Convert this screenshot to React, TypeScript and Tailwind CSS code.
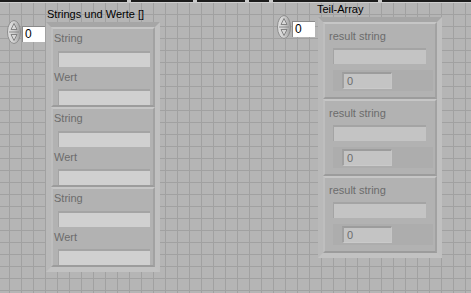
import React from "react";

const font = "font-['Liberation_Sans',Arial,sans-serif]";

function Spinner() {
  return (
    <svg width="14" height="24" viewBox="0 0 14 24">
      <defs>
        <linearGradient id="sg" x1="0" x2="1" y1="0" y2="0">
          <stop offset="0" stopColor="#e2e2e2" />
          <stop offset="0.5" stopColor="#cfcfcf" />
          <stop offset="1" stopColor="#9e9e9e" />
        </linearGradient>
      </defs>
      <ellipse cx="7" cy="12" rx="6.5" ry="11.5" fill="url(#sg)" stroke="#8c8c8c" strokeWidth="1" />
      <line x1="2" y1="12" x2="12" y2="12" stroke="#8c8c8c" strokeWidth="1" />
      <path d="M7 3.5 L10 9.5 L4 9.5 Z" fill="#d8d8d8" stroke="#7a7a7a" strokeWidth="0.9" />
      <path d="M7 20.5 L10 14.5 L4 14.5 Z" fill="#d8d8d8" stroke="#7a7a7a" strokeWidth="0.9" />
    </svg>
  );
}

function NumericControl() {
  return (
    <div className="flex items-start gap-[1px]">
      <Spinner />
      <div className="mt-[6px] h-[16px] w-[23px] border-t border-l border-[#8a8a8a] bg-white pl-[2px] text-[12px] leading-[15px] text-black">
        0
      </div>
    </div>
  );
}

function LeftCluster() {
  return (
    <div className="h-[80px] border-2 border-t-[#c6c6c6] border-l-[#bebebe] border-b-[#9c9c9c] border-r-[#a2a2a2] bg-[#b2b2b2] pt-[3px]">
      <div className="h-[13px] pl-[1px] text-[11px] leading-[13px] text-[#6c6c6c]">String</div>
      <div className="ml-[5px] mt-[6px] h-[16px] w-[92px] border-t-2 border-l border-[#a4a4a4] bg-[#d0d0d0]" />
      <div className="mt-[4px] h-[13px] pl-[1px] text-[11px] leading-[13px] text-[#6c6c6c]">Wert</div>
      <div className="ml-[5px] mt-[5px] h-[16px] w-[92px] border-t-2 border-l border-[#a4a4a4] bg-[#d0d0d0]" />
    </div>
  );
}

function RightCluster() {
  return (
    <div className="h-[77px] border-2 border-t-[#c6c6c6] border-l-[#bebebe] border-b-[#9c9c9c] border-r-[#a2a2a2] bg-[#b2b2b2] pt-[6px]">
      <div className="h-[13px] pl-[4px] text-[11px] leading-[13px] text-[#6c6c6c]">result string</div>
      <div className="ml-[8px] mt-[5px] h-[16px] w-[93px] border-t-2 border-l border-[#a4a4a4] bg-[#c4c4c4]" />
      <div className="ml-[8px] mt-[6px] flex h-[21px] w-[100px] items-center bg-[#adadad] pl-[9px]">
        <div className="h-[17px] w-[50px] border-t-2 border-l-2 border-b border-r border-t-[#9c9c9c] border-l-[#a0a0a0] border-b-[#cacaca] border-r-[#c6c6c6] bg-[#c4c4c4] pl-[3px] text-[11px] leading-[14px] text-[#6c6c6c]">
          0
        </div>
      </div>
    </div>
  );
}

function ArrayFrame({ children }: { children: React.ReactNode }) {
  return (
    <div className="border-[5px] border-t-[#a6a6a6] border-l-[#b9b9b9] border-b-[#c2c2c2] border-r-[#c0c0c0] bg-[#adadad]">
      {children}
    </div>
  );
}

function TopBar() {
  const segs = [128, 62, 48, 20, 106, 89];
  return (
    <div className="flex h-[3px] w-full">
      {segs.map((w, i) => (
        <React.Fragment key={i}>
          <div className="h-[3px] border-b border-b-[#cfcfcf] bg-[#1c1c1c]" style={{ width: w }} />
          {i < segs.length - 1 && <div className="h-[3px] w-[4px] bg-[#c9c9c9]" />}
        </React.Fragment>
      ))}
    </div>
  );
}

export default function App() {
  return (
    <div
      className={`relative h-[293px] w-[471px] overflow-hidden bg-[#b5b5b5] ${font} bg-[linear-gradient(to_right,#a1a1a1_1px,transparent_1px),linear-gradient(to_bottom,#a1a1a1_1px,transparent_1px)] bg-[size:12px_12px] bg-[position:9px_2px]`}
    >
      <TopBar />

      {/* Left numeric index */}
      <div className="absolute left-[7px] top-[20px]">
        <NumericControl />
      </div>

      {/* Left array */}
      <div className="absolute left-[47px] top-[8px] text-[11px] leading-[13px] text-black">Strings und Werte []</div>
      <div className="absolute left-[46px] top-[22px] w-[114px]">
        <ArrayFrame>
          <LeftCluster />
          <LeftCluster />
          <LeftCluster />
        </ArrayFrame>
      </div>

      {/* Right numeric index */}
      <div className="absolute left-[277px] top-[15px]">
        <NumericControl />
      </div>

      {/* Right array */}
      <div className="absolute left-[317px] top-[3px] text-[11px] leading-[13px] text-black">Teil-Array</div>
      <div className="absolute left-[318px] top-[17px] w-[124px]">
        <ArrayFrame>
          <RightCluster />
          <RightCluster />
          <RightCluster />
        </ArrayFrame>
      </div>
    </div>
  );
}
